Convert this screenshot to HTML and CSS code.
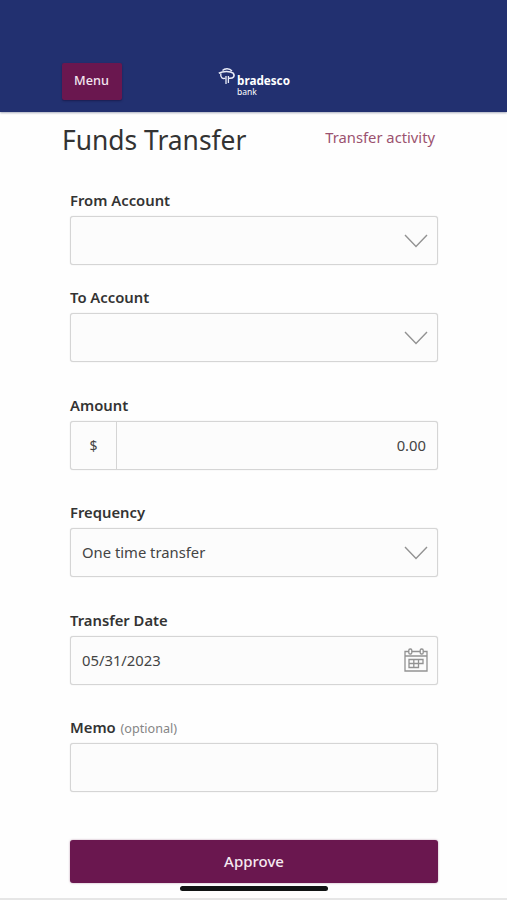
FILE: index.html
```html
<!DOCTYPE html>
<html lang="en">
<head>
<meta charset="utf-8">
<title>Funds Transfer</title>
<link rel="stylesheet" href="styles.css">
</head>
<body>
<header class="header">
  <button class="menu">Menu</button>
  <div class="logo">
    <svg class="tree" width="19" height="19" viewBox="0 0 19 19" fill="none" stroke="#e9ecf8">
      <path d="M4.500 3.500C7 1 11.500 1.200 14 4" stroke-width="1.400"/>
      <path d="M.8 6.200C5 4 12 3.800 15.200 6.200C17.200 9 15.500 11.600 11 11.200" stroke-width="1.600"/>
      <path d="M2.800 6.500C2.200 10.500 4.500 12.300 7.500 11.200" stroke-width="1.400"/>
      <path d="M8 9V17M10.400 9V16" stroke-width="1.300"/>
    </svg>
    <div class="wordmark"><strong class="brand">bradesco</strong><span class="sub">bank</span></div>
  </div>
</header>
<main class="page">
  <div class="heading">
    <h1 class="title">Funds Transfer</h1>
    <a class="activity">Transfer activity</a>
  </div>
  <form class="form">
    <div class="field">
      <label class="label">From Account</label>
      <div class="box"><svg class="chevron" width="24" height="14" viewBox="0 0 24 14"><path d="M1 1L12 12.500L23 1"/></svg></div>
    </div>
    <div class="field">
      <label class="label">To Account</label>
      <div class="box"><svg class="chevron" width="24" height="14" viewBox="0 0 24 14"><path d="M1 1L12 12.500L23 1"/></svg></div>
    </div>
    <div class="field">
      <label class="label">Amount</label>
      <div class="box box-amount"><span class="currency">$</span><span class="amount">0.00</span></div>
    </div>
    <div class="field">
      <label class="label">Frequency</label>
      <div class="box"><span class="value">One time transfer</span><svg class="chevron" width="24" height="14" viewBox="0 0 24 14"><path d="M1 1L12 12.500L23 1"/></svg></div>
    </div>
    <div class="field">
      <label class="label">Transfer Date</label>
      <div class="box"><span class="value">05/31/2023</span>
        <svg class="calendar" width="24" height="24" viewBox="0 0 24 24">
          <path d="M4.800 3.500H1V23H23V3.500H19.200M7.800 3.500H16.200M1 8H23"/>
          <rect x="4.800" y="1" width="3" height="5" rx="1.300"/><rect x="16.200" y="1" width="3" height="5" rx="1.300"/>
          <path d="M5 11.500H19V15.500H14.500V19.500H5ZM5 15.500H14.500M9.800 11.500V19.500M14.500 11.500V15.500"/>
        </svg>
      </div>
    </div>
    <div class="field">
      <label class="label">Memo <span class="optional">(optional)</span></label>
      <div class="box"></div>
    </div>
    <button class="approve" type="button">Approve</button>
  </form>
</main>
<div class="home-bar"></div>
<div class="bottom-line"></div>
</body>
</html>
```
FILE: styles.css
```css
* { box-sizing: border-box; }
body {
  margin: 0;
  height: 900px;
  overflow: hidden;
  position: relative;
  background: #fefefe;
  color: #333;
  font-family: "Noto Sans", sans-serif;
}
.header {
  height: 112px;
  padding: 63px 0 0 62px;
  display: flex;
  align-items: flex-start;
  background: #223070;
  box-shadow: 0 1px 2px rgba(40, 50, 90, .4);
}
.menu {
  width: 60px;
  height: 37px;
  padding: 0 1px 3px 0;
  border: 0;
  border-radius: 2px;
  background: #6a174f;
  box-shadow: 0 1px 2px rgba(20, 10, 50, .5);
  color: #f3e6f0;
  font: 500 12.700px "Noto Sans", sans-serif;
}
.logo { display: flex; margin: 4px 0 0 96px; color: #fff; }
.tree { display: block; }
.wordmark { display: flex; flex-direction: column; padding-top: 5px; }
.brand { font-size: 11.700px; line-height: 16px; font-weight: 700; }
.sub { margin-top: -2px; font-size: 8.500px; line-height: 11px; }
.page { padding: 0 69px 0 70px; }
.heading {
  height: 76px;
  margin-left: -8px;
  padding: 8px 3px 0 0;
  display: flex;
  justify-content: space-between;
  align-items: flex-start;
}
.title { margin: 0; font-size: 26.400px; line-height: 40px; font-weight: 400; }
.activity { font-size: 14.750px; line-height: 35px; color: #9b526f; }
.field { margin-bottom: 30.500px; }
.field:first-child { margin-bottom: 20px; }
.label { display: block; height: 28px; font-size: 14.800px; line-height: 24px; font-weight: 600; }
.optional { margin-left: 1px; font-size: 12.600px; font-weight: 400; color: #858585; }
.box {
  height: 49px;
  padding: 0 9px 0 11px;
  display: flex;
  align-items: center;
  border: 1px solid #d5d5d5;
  border-radius: 3px;
  background: #fcfcfc;
  box-shadow: 0 0 1px #ccc;
  font-size: 14.800px;
  color: #444;
}
.value { padding-bottom: 1px; }
.box-amount { padding: 0 11px 0 0; }
.currency {
  width: 46px;
  height: 100%;
  display: flex;
  align-items: center;
  justify-content: center;
  border-right: 1px solid #d5d5d5;
  font-size: 14px;
}
.amount { margin-left: auto; }
.chevron, .calendar { margin-left: auto; fill: none; stroke: #929292; stroke-width: 1.400; }
.calendar { stroke-width: 1.300; }
.approve {
  display: block;
  width: 100%;
  height: 43px;
  margin-top: 48px;
  padding: 0 0 1px;
  border: 0;
  border-radius: 3px;
  background: #6a174f;
  box-shadow: 0 0 2px rgba(106, 23, 79, .5);
  color: #f5e9f1;
  font: 500 15px "Noto Sans", sans-serif;
}
.home-bar {
  position: absolute;
  left: 180px;
  top: 886px;
  width: 148px;
  height: 5px;
  border-radius: 3px;
  background: #111414;
}
.bottom-line { position: absolute; left: 0; right: 0; bottom: 0; height: 2px; background: #e6e6e6; }
```
